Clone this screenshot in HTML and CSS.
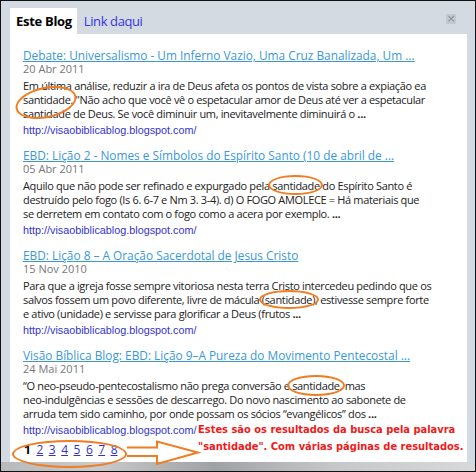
FILE: index.html
```html
<!DOCTYPE html>
<html lang="pt">
<head>
<meta charset="utf-8">
<title>Este Blog</title>
<link rel="stylesheet" href="styles.css">
</head>
<body>
<div class="frame">
  <div class="header">
    <div class="tabs">
      <span class="tab active">Este Blog</span>
      <a class="tab link" href="#">Link daqui</a>
    </div>
    <span class="close">&#215;</span>
  </div>
  <div class="panel">
    <div class="entry">
      <a class="title" href="#">Debate: Universalismo - Um Inferno Vazio, Uma Cruz Banalizada, Um ...</a>
      <div class="date">20 Abr 2011</div>
      <p class="snippet">Em última análise, reduzir a ira de Deus afeta os pontos de vista sobre a expiação ea<br><span class="hl hl1">santidade.</span> "Não acho que você vê o espetacular amor de Deus até ver a espetacular<br>santidade de Deus. Se você diminuir um, inevitavelmente diminuirá o <b>...</b></p>
      <a class="url" href="#">http://visaobiblicablog.blogspot.com/</a>
    </div>
    <div class="entry">
      <a class="title" href="#">EBD: Lição 2 - Nomes e Símbolos do Espírito Santo (10 de abril de ...</a>
      <div class="date">05 Abr 2011</div>
      <p class="snippet">Aquilo que não pode ser refinado e expurgado pela <span class="hl hl2">santidade</span> do Espírito Santo é<br>destruído pelo fogo (Is 6. 6-7 e Nm 3. 3-4). d) O FOGO AMOLECE = Há materiais que<br>se derretem em contato com o fogo como a acera por exemplo. <b>...</b></p>
      <a class="url" href="#">http://visaobiblicablog.blogspot.com/</a>
    </div>
    <div class="entry">
      <a class="title" href="#">EBD: Lição 8 – A Oração Sacerdotal de Jesus Cristo</a>
      <div class="date">15 Nov 2010</div>
      <p class="snippet">Para que a igreja fosse sempre vitoriosa nesta terra Cristo intercedeu pedindo que os<br>salvos fossem um povo diferente, livre de mácula <span class="hl hl3">(santidade)</span>, estivesse sempre forte<br>e ativo (unidade) e servisse para glorificar a Deus (frutos <b>...</b></p>
      <a class="url" href="#">http://visaobiblicablog.blogspot.com/</a>
    </div>
    <div class="entry">
      <a class="title" href="#">Visão Bíblica Blog: EBD: Lição 9–A Pureza do Movimento Pentecostal ...</a>
      <div class="date">24 Mai 2011</div>
      <p class="snippet">“O neo-pseudo-pentecostalismo não prega conversão e <span class="hl hl4">santidade</span>, mas<br>neo-indulgências e sessões de descarrego. Do novo nascimento ao sabonete de<br>arruda tem sido caminho, por onde possam os sócios “evangélicos” dos <b>...</b></p>
      <a class="url" href="#">http://visaobiblicablog.blogspot.com/</a>
    </div>
    <div class="pager">
      <span class="current">1</span>
      <a href="#">2</a><a href="#">3</a><a href="#">4</a><a href="#">5</a><a href="#">6</a><a href="#">7</a><a href="#">8</a>
      <svg class="arrow" width="76" height="26" viewBox="0 0 76 26">
        <path d="M1 7.5 L31 7.5 L31 1.5 L72 12.5 L31 24 L31 16 L1 16" fill="none" stroke="#f07d22" stroke-width="2" stroke-linejoin="miter"/>
      </svg>
    </div>
  </div>
  <div class="bottom"></div>

  <div class="note">
    <div>Estes são os resultados da busca pela palavra</div>
    <div>"santidade". Com várias páginas de resultados.</div>
  </div>
</div>
</body>
</html>
```

FILE: styles.css
```css
html, body {
  margin: 0;
  padding: 0;
}
body {
  background: #fff;
  font-family: "Open Sans", "Noto Sans", sans-serif;
}
.frame {
  position: relative;
  width: 476px;
  height: 472px;
  box-sizing: border-box;
  border: 1px solid #111;
  background: #d3dae2;
  display: flex;
  flex-direction: column;
  overflow: hidden;
}
.header {
  height: 33px;
  display: flex;
  align-items: flex-end;
  justify-content: space-between;
  padding: 0 9px 0 9px;
}
.tabs {
  display: flex;
  align-items: stretch;
  height: 26px;
}
.tab {
  display: flex;
  align-items: center;
  font-size: 13px;
  text-decoration: none;
}
.tab.active {
  background: #fff;
  color: #000;
  font-weight: bold;
  letter-spacing: -0.3px;
  padding: 0 5px 0 6px;
}
.tab.link {
  color: #3535e0;
  padding-left: 7px;
  letter-spacing: -0.4px;
}
.close {
  align-self: flex-start;
  margin-top: 13px;
  margin-right: 10px;
  width: 10px;
  height: 10px;
  background: #c4c9cf;
  color: #8a8f95;
  font-size: 11px;
  line-height: 10px;
  text-align: center;
  font-family: "DejaVu Sans", sans-serif;
}
.panel {
  margin: 0 8px 0 9px;
  height: 428px;
  background: #fff;
  padding: 14px 6px 0 13px;
  box-sizing: border-box;
}
.entry {
  margin-bottom: 11px;
}
.title {
  display: block;
  color: #3a98d8;
  font-size: 11.85px;
  line-height: 14px;
  white-space: nowrap;
}
.date {
  color: #777;
  font-size: 11px;
  line-height: 14px;
}
.snippet {
  margin: 3px 0 0 0;
  color: #222;
  font-size: 11px;
  letter-spacing: -0.34px;
  line-height: 14px;
}
.snippet b {
  font-weight: bold;
}
.hl {
  position: relative;
}
.hl::after {
  content: "";
  position: absolute;
  border: 2px solid #f07d22;
  border-radius: 50%;
  pointer-events: none;
}
.hl1::after {
  left: -8px;
  right: -4px;
  top: -5px;
  bottom: -11px;
  transform: rotate(-12deg);
}
.hl2::after {
  left: -4px;
  right: -3px;
  top: -3px;
  bottom: -2px;
}
.hl3::after {
  left: -3px;
  right: -4px;
  top: -2px;
  bottom: -2px;
}
.hl4::after {
  left: -5px;
  right: -5px;
  top: -3px;
  bottom: -3px;
}
.url {
  display: block;
  margin-top: 2px;
  font-family: "Liberation Sans", Arial, sans-serif;
  font-size: 10.8px;
  line-height: 14px;
  color: #3333cc;
  text-decoration: none;
}
.pager {
  position: relative;
  margin-top: -6px;
  display: flex;
  width: max-content;
  gap: 5.5px;
  padding-left: 1px;
  padding-right: 4px;
  font-size: 12px;
  line-height: 16px;
}
.pager::before {
  content: "";
  position: absolute;
  left: -11px;
  right: -5px;
  top: -2px;
  bottom: -10px;
  border: 2px solid #f07d22;
  border-radius: 50%;
  pointer-events: none;
}
.pager .current {
  font-weight: bold;
  color: #000;
}
.pager a {
  color: #3333cc;
}
.arrow {
  position: absolute;
  left: 103px;
  top: -2px;
}
.bottom {
  flex: 1;
  background: linear-gradient(90deg, #b7b9bb 0%, #c9cacb 20%, #9fa2a5 45%, #c6c7c9 70%, #d8d9da 100%);
}
.note {
  position: absolute;
  left: 197px;
  top: 420px;
  color: #ee1a1a;
  font-family: "DejaVu Sans Condensed", "DejaVu Sans", sans-serif;
  font-weight: bold;
  font-size: 11px;
  line-height: 17px;
  white-space: nowrap;
}
```
